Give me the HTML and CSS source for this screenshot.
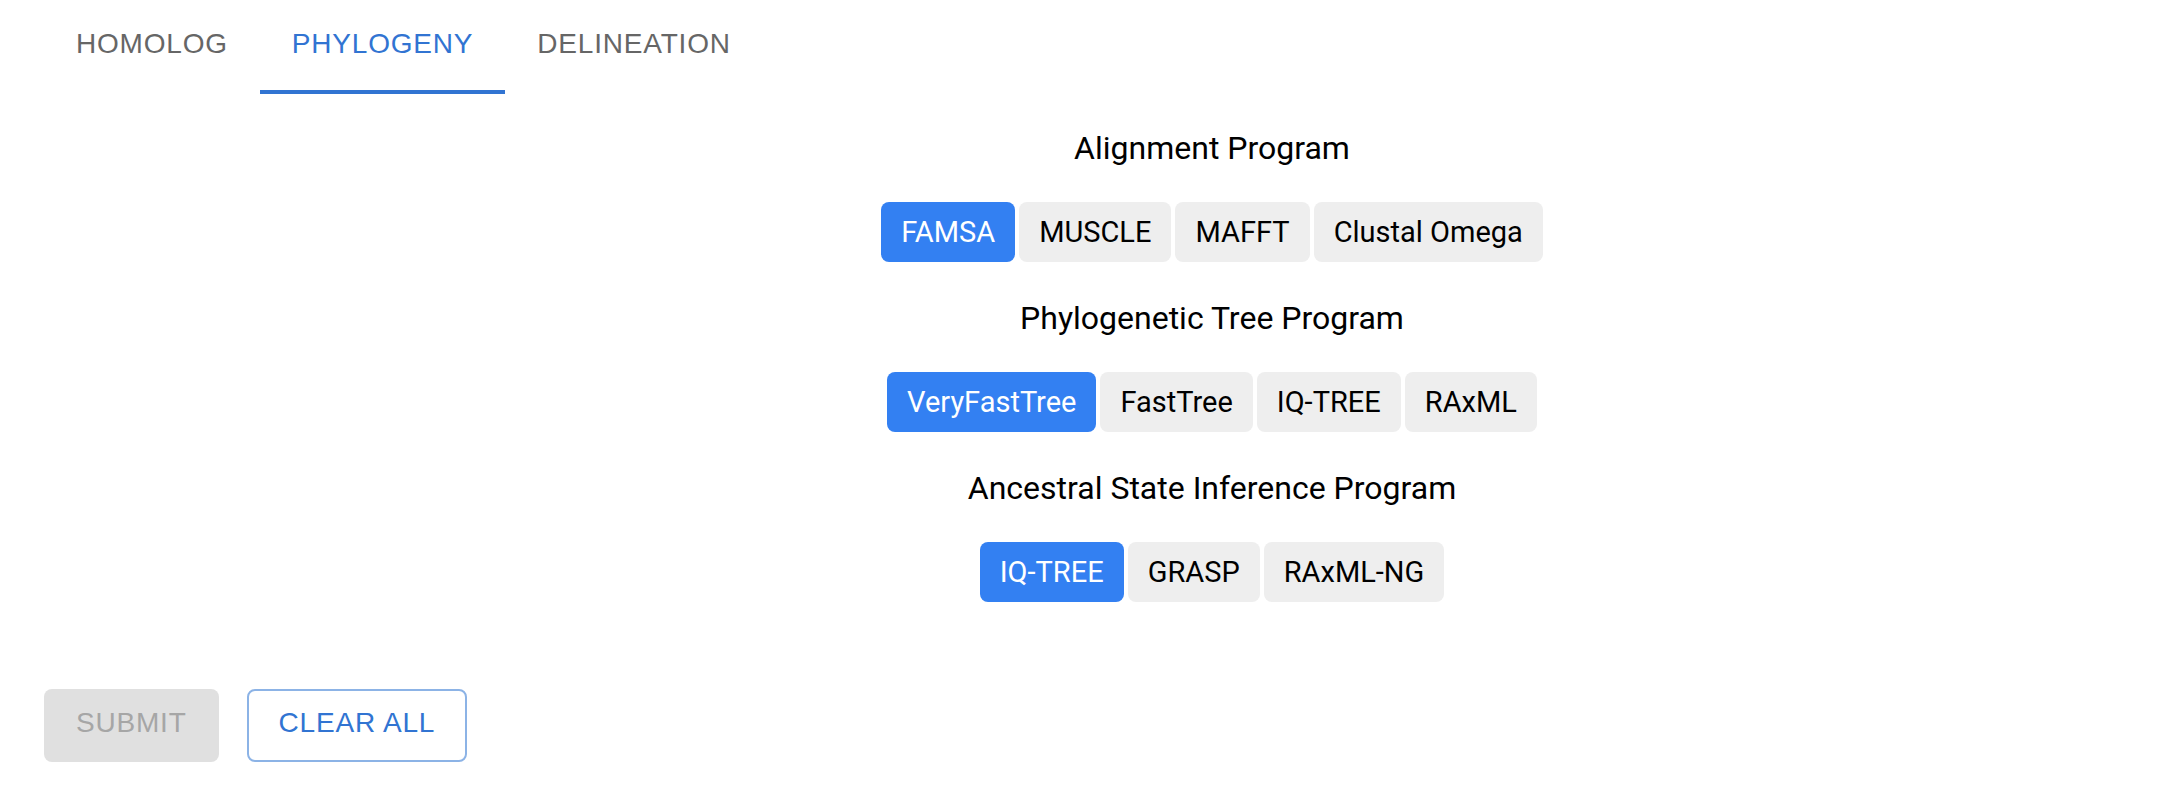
FILE: index.html
```html
<!DOCTYPE html>
<html lang="en">
<head>
<meta charset="utf-8">
<title>Phylogeny</title>
<link rel="stylesheet" href="styles.css">
</head>
<body>
<div class="page">
  <nav class="tabs">
    <div class="tab">HOMOLOG</div>
    <div class="tab active">PHYLOGENY</div>
    <div class="tab">DELINEATION</div>
  </nav>
  <div class="options">
    <section class="group">
      <h2 class="group-title">Alignment Program</h2>
      <div class="toggle-row">
        <button class="toggle selected">FAMSA</button>
        <button class="toggle">MUSCLE</button>
        <button class="toggle">MAFFT</button>
        <button class="toggle">Clustal Omega</button>
      </div>
    </section>
    <section class="group">
      <h2 class="group-title">Phylogenetic Tree Program</h2>
      <div class="toggle-row">
        <button class="toggle selected">VeryFastTree</button>
        <button class="toggle">FastTree</button>
        <button class="toggle">IQ-TREE</button>
        <button class="toggle">RAxML</button>
      </div>
    </section>
    <section class="group">
      <h2 class="group-title">Ancestral State Inference Program</h2>
      <div class="toggle-row">
        <button class="toggle selected">IQ-TREE</button>
        <button class="toggle">GRASP</button>
        <button class="toggle">RAxML-NG</button>
      </div>
    </section>
  </div>
  <div class="actions">
    <button class="btn btn-disabled" disabled>SUBMIT</button>
    <button class="btn btn-outline">CLEAR ALL</button>
  </div>
</div>
</body>
</html>
```
FILE: styles.css
```css
body {
  margin: 0;
  background: #ffffff;
}

.page {
  padding-left: 44px;
}

.tabs {
  display: flex;
  height: 94px;
}

.tab {
  box-sizing: border-box;
  height: 94px;
  padding: 30px 32px 0;
  font-family: "Liberation Sans", Arial, sans-serif;
  font-size: 28px;
  line-height: 28px;
  letter-spacing: 0.8px;
  color: #666666;
  border-bottom: 4px solid transparent;
}

.tab.active {
  color: #3174d2;
  border-bottom-color: #3174d2;
}

.options {
  margin-left: 210px;
  padding-top: 34px;
  display: flex;
  flex-direction: column;
  align-items: center;
}

.group {
  display: flex;
  flex-direction: column;
  align-items: center;
  margin-bottom: 36px;
}

.group-title {
  margin: 0 0 34px;
  font-family: Roboto, sans-serif;
  font-weight: 400;
  font-size: 32px;
  line-height: 40px;
  color: #000000;
}

.toggle-row {
  display: flex;
  gap: 4px;
}

.toggle {
  height: 60px;
  padding: 0 20px;
  border: 0;
  border-radius: 8px;
  background: #eeeeee;
  color: #000000;
  font-family: Roboto, sans-serif;
  font-size: 29px;
  font-weight: 400;
}

.toggle.selected {
  background: #3380f2;
  color: #ffffff;
}

.actions {
  display: flex;
  gap: 28px;
  margin-top: 51px;
}

.btn {
  box-sizing: border-box;
  height: 73px;
  border-radius: 8px;
  font-family: "Liberation Sans", Arial, sans-serif;
  font-size: 28px;
  letter-spacing: 0.8px;
  background: #ffffff;
}

.btn-disabled {
  padding: 0 32px 6px;
  border: 0;
  background: #e0e0e0;
  color: #a6a6a6;
}

.btn-outline {
  padding: 0 30px 6px;
  border: 2px solid #8cb3e6;
  color: #3174d2;
}
```
